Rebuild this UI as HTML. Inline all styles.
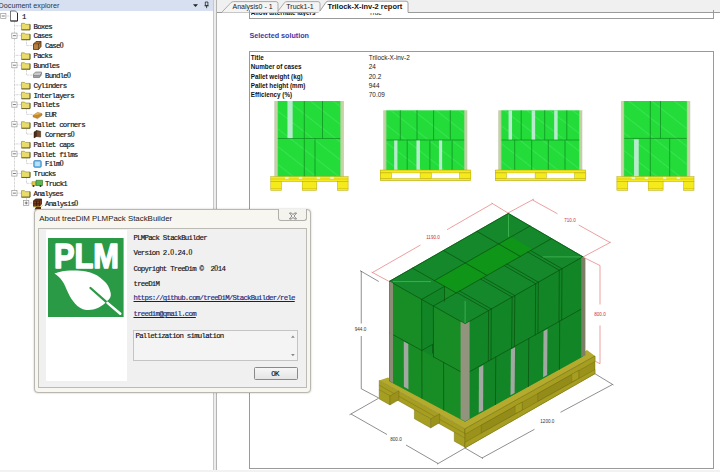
<!DOCTYPE html><html><head><meta charset="utf-8"><title>StackBuilder</title><style>
html,body{margin:0;padding:0;}
body{width:720px;height:472px;overflow:hidden;background:#fff;position:relative;font-family:"Liberation Sans",sans-serif;}
.abs{position:absolute;}
.tt{position:absolute;font-family:"Liberation Mono",monospace;font-size:7.4px;letter-spacing:-0.77px;line-height:10px;height:10px;color:#0c0c0c;white-space:pre;-webkit-text-stroke:0.18px #222;}
.dt{position:absolute;font-family:"Liberation Mono",monospace;font-size:7.4px;letter-spacing:-0.77px;line-height:10px;height:10px;color:#0c0c0c;white-space:pre;-webkit-text-stroke:0.15px #222;}
.z{font-family:"Liberation Serif",serif;letter-spacing:0;display:inline-block;width:3.67px;text-align:center;font-size:7.6px}
.lb{position:absolute;font-weight:bold;font-size:6.3px;line-height:8px;color:#111;white-space:pre;}
.vl{position:absolute;font-size:6.4px;line-height:8px;color:#222;white-space:pre;}
.dim{position:absolute;font-size:4.6px;line-height:6px;white-space:pre;transform:translate(-50%,-50%);}
</style></head><body>
<div class="abs" style="left:0;top:0;width:212.5px;height:10.6px;background:#d6e0f0;"></div>
<div class="abs" style="left:-1.4px;top:0.5px;font-size:7.2px;line-height:9px;color:#2a3446;white-space:pre">Document explorer</div>
<svg class="abs" style="left:190px;top:0" width="22" height="11" viewBox="0 0 22 11"><path d="M3,4.2 h5 l-2.5,2.8z" fill="#222"/><path d="M15.3,2 h2.6 v3.6 h-2.6z M14.5,5.8 h4.2 M16.6,5.8 v2.4" fill="none" stroke="#222" stroke-width="0.8"/></svg>
<div class="abs" style="left:212.5px;top:0;width:4.2px;height:472px;background:#ececec;border-left:0.6px solid #c8c8c8;border-right:0.7px solid #b4b4b4;box-sizing:border-box"></div>
<svg class="abs" style="left:0;top:0" width="213" height="236" viewBox="0 0 213 236"><path d="M14.5,21.0 V193.156" stroke="#a8a8a8" stroke-width="0.7" stroke-dasharray="0.7,0.7" fill="none"/><path d="M5.5,16.0 H10" stroke="#a8a8a8" stroke-width="0.7" stroke-dasharray="0.7,0.7" fill="none"/><path d="M14.5,25.842 H21" stroke="#a8a8a8" stroke-width="0.7" stroke-dasharray="0.7,0.7" fill="none"/><path d="M14.5,35.684 H21" stroke="#a8a8a8" stroke-width="0.7" stroke-dasharray="0.7,0.7" fill="none"/><path d="M26.5,40.526 V45.526 H33" stroke="#a8a8a8" stroke-width="0.7" stroke-dasharray="0.7,0.7" fill="none"/><path d="M14.5,55.368 H21" stroke="#a8a8a8" stroke-width="0.7" stroke-dasharray="0.7,0.7" fill="none"/><path d="M14.5,65.21000000000001 H21" stroke="#a8a8a8" stroke-width="0.7" stroke-dasharray="0.7,0.7" fill="none"/><path d="M26.5,70.052 V75.052 H33" stroke="#a8a8a8" stroke-width="0.7" stroke-dasharray="0.7,0.7" fill="none"/><path d="M14.5,84.894 H21" stroke="#a8a8a8" stroke-width="0.7" stroke-dasharray="0.7,0.7" fill="none"/><path d="M14.5,94.736 H21" stroke="#a8a8a8" stroke-width="0.7" stroke-dasharray="0.7,0.7" fill="none"/><path d="M14.5,104.578 H21" stroke="#a8a8a8" stroke-width="0.7" stroke-dasharray="0.7,0.7" fill="none"/><path d="M26.5,109.42 V114.42 H33" stroke="#a8a8a8" stroke-width="0.7" stroke-dasharray="0.7,0.7" fill="none"/><path d="M14.5,124.262 H21" stroke="#a8a8a8" stroke-width="0.7" stroke-dasharray="0.7,0.7" fill="none"/><path d="M26.5,129.104 V134.104 H33" stroke="#a8a8a8" stroke-width="0.7" stroke-dasharray="0.7,0.7" fill="none"/><path d="M14.5,143.94600000000003 H21" stroke="#a8a8a8" stroke-width="0.7" stroke-dasharray="0.7,0.7" fill="none"/><path d="M14.5,153.788 H21" stroke="#a8a8a8" stroke-width="0.7" stroke-dasharray="0.7,0.7" fill="none"/><path d="M26.5,158.63 V163.63 H33" stroke="#a8a8a8" stroke-width="0.7" stroke-dasharray="0.7,0.7" fill="none"/><path d="M14.5,173.472 H21" stroke="#a8a8a8" stroke-width="0.7" stroke-dasharray="0.7,0.7" fill="none"/><path d="M26.5,178.31400000000002 V183.31400000000002 H33" stroke="#a8a8a8" stroke-width="0.7" stroke-dasharray="0.7,0.7" fill="none"/><path d="M14.5,193.156 H21" stroke="#a8a8a8" stroke-width="0.7" stroke-dasharray="0.7,0.7" fill="none"/><path d="M26.5,197.99800000000002 V202.99800000000002 H33" stroke="#a8a8a8" stroke-width="0.7" stroke-dasharray="0.7,0.7" fill="none"/><rect x="0.6999999999999997" y="13.4" width="5.2" height="5.2" fill="#fff" stroke="#9a9a9a" stroke-width="0.7"/><path d="M1.7999999999999998,16.0 h3" stroke="#444" stroke-width="0.7"/><path d="M10.5,11.0 h5 l2,2 v8 h-7 z" fill="#fff" stroke="#555" stroke-width="0.8"/><path d="M10.5,21.0 h7 v-8" fill="none" stroke="#222" stroke-width="0.9"/><path d="M21.5,23.342 h3 l1,1 h4.5 v5.5 h-8.5 z" fill="#e9dc6c" stroke="#9a8f3a" stroke-width="0.7"/><path d="M21.5,29.842 h8.5 v-5.5" fill="none" stroke="#55502a" stroke-width="0.8"/><rect x="11.8" y="33.083999999999996" width="5.2" height="5.2" fill="#fff" stroke="#9a9a9a" stroke-width="0.7"/><path d="M12.9,35.684 h3" stroke="#444" stroke-width="0.7"/><path d="M21.5,33.184 h3 l1,1 h4.5 v5.5 h-8.5 z" fill="#e9dc6c" stroke="#9a8f3a" stroke-width="0.7"/><path d="M21.5,39.684 h8.5 v-5.5" fill="none" stroke="#55502a" stroke-width="0.8"/><path d="M33.5,44.026 l2.5,-2.5 h5 v5 l-2.5,3 h-5 z" fill="#a8743a" stroke="#4a2c10" stroke-width="0.8"/><path d="M33.5,44.026 h5 l2.5,-2.5 M38.5,44.026 v5.5" fill="none" stroke="#4a2c10" stroke-width="0.7"/><path d="M34,44.326 h4.2 v4.8 h-4.2z" fill="#b8803f"/><path d="M21.5,52.868 h3 l1,1 h4.5 v5.5 h-8.5 z" fill="#e9dc6c" stroke="#9a8f3a" stroke-width="0.7"/><path d="M21.5,59.368 h8.5 v-5.5" fill="none" stroke="#55502a" stroke-width="0.8"/><rect x="11.8" y="62.61000000000001" width="5.2" height="5.2" fill="#fff" stroke="#9a9a9a" stroke-width="0.7"/><path d="M12.9,65.21000000000001 h3" stroke="#444" stroke-width="0.7"/><path d="M21.5,62.71000000000001 h3 l1,1 h4.5 v5.5 h-8.5 z" fill="#e9dc6c" stroke="#9a8f3a" stroke-width="0.7"/><path d="M21.5,69.21000000000001 h8.5 v-5.5" fill="none" stroke="#55502a" stroke-width="0.8"/><path d="M33.5,74.052 l2,-2 h6 v2 l-2,3.5 h-6 z" fill="#c9c9c9" stroke="#777" stroke-width="0.7"/><path d="M33.5,75.552 h6 l2,-2 M33.5,76.852 h6 l2,-2" fill="none" stroke="#666" stroke-width="0.6"/><path d="M21.5,82.394 h3 l1,1 h4.5 v5.5 h-8.5 z" fill="#e9dc6c" stroke="#9a8f3a" stroke-width="0.7"/><path d="M21.5,88.894 h8.5 v-5.5" fill="none" stroke="#55502a" stroke-width="0.8"/><path d="M21.5,92.236 h3 l1,1 h4.5 v5.5 h-8.5 z" fill="#e9dc6c" stroke="#9a8f3a" stroke-width="0.7"/><path d="M21.5,98.736 h8.5 v-5.5" fill="none" stroke="#55502a" stroke-width="0.8"/><rect x="11.8" y="101.97800000000001" width="5.2" height="5.2" fill="#fff" stroke="#9a9a9a" stroke-width="0.7"/><path d="M12.9,104.578 h3" stroke="#444" stroke-width="0.7"/><path d="M21.5,102.078 h3 l1,1 h4.5 v5.5 h-8.5 z" fill="#e9dc6c" stroke="#9a8f3a" stroke-width="0.7"/><path d="M21.5,108.578 h8.5 v-5.5" fill="none" stroke="#55502a" stroke-width="0.8"/><path d="M33,115.42 l4.5,-3 l4.5,1.2 l-4.5,3.4 z" fill="#e8b64c" stroke="#b07820" stroke-width="0.6"/><path d="M33,115.42 v1.4 l4.5,1.8 l4.5,-3.4 v-1.4" fill="#c8862a" stroke="#a06818" stroke-width="0.5"/><rect x="11.8" y="121.662" width="5.2" height="5.2" fill="#fff" stroke="#9a9a9a" stroke-width="0.7"/><path d="M12.9,124.262 h3" stroke="#444" stroke-width="0.7"/><path d="M21.5,121.762 h3 l1,1 h4.5 v5.5 h-8.5 z" fill="#e9dc6c" stroke="#9a8f3a" stroke-width="0.7"/><path d="M21.5,128.262 h8.5 v-5.5" fill="none" stroke="#55502a" stroke-width="0.8"/><path d="M34,132.104 l2.6,-1.6 v6 l-2.6,1.4 z" fill="#4a2a14" stroke="#2a1808" stroke-width="0.5"/><path d="M36.6,130.50400000000002 l4,0.8 v5.8 l-4,-0.6 z" fill="#7a4a26" stroke="#2a1808" stroke-width="0.5"/><path d="M21.5,141.44600000000003 h3 l1,1 h4.5 v5.5 h-8.5 z" fill="#e9dc6c" stroke="#9a8f3a" stroke-width="0.7"/><path d="M21.5,147.94600000000003 h8.5 v-5.5" fill="none" stroke="#55502a" stroke-width="0.8"/><rect x="11.8" y="151.18800000000002" width="5.2" height="5.2" fill="#fff" stroke="#9a9a9a" stroke-width="0.7"/><path d="M12.9,153.788 h3" stroke="#444" stroke-width="0.7"/><path d="M21.5,151.288 h3 l1,1 h4.5 v5.5 h-8.5 z" fill="#e9dc6c" stroke="#9a8f3a" stroke-width="0.7"/><path d="M21.5,157.788 h8.5 v-5.5" fill="none" stroke="#55502a" stroke-width="0.8"/><rect x="33.8" y="160.63" width="7.4" height="6.6" rx="1" fill="#7cc4ee" stroke="#2878b8" stroke-width="0.8"/><rect x="35.2" y="161.82999999999998" width="4.6" height="4.2" fill="#b8e2fa"/><rect x="11.8" y="170.872" width="5.2" height="5.2" fill="#fff" stroke="#9a9a9a" stroke-width="0.7"/><path d="M12.9,173.472 h3" stroke="#444" stroke-width="0.7"/><path d="M21.5,170.972 h3 l1,1 h4.5 v5.5 h-8.5 z" fill="#e9dc6c" stroke="#9a8f3a" stroke-width="0.7"/><path d="M21.5,177.472 h8.5 v-5.5" fill="none" stroke="#55502a" stroke-width="0.8"/><rect x="32" y="181.81400000000002" width="4" height="3.6" fill="#e0c84a" stroke="#8a7a20" stroke-width="0.5"/><path d="M36,180.31400000000002 h6.5 v5.2 h-6.5 z" fill="#58b848" stroke="#2a6a22" stroke-width="0.6"/><circle cx="33.5" cy="185.91400000000002" r="1" fill="#333"/><circle cx="40.5" cy="185.91400000000002" r="1" fill="#333"/><rect x="11.8" y="190.556" width="5.2" height="5.2" fill="#fff" stroke="#9a9a9a" stroke-width="0.7"/><path d="M12.9,193.156 h3" stroke="#444" stroke-width="0.7"/><path d="M21.5,190.656 h3 l1,1 h4.5 v5.5 h-8.5 z" fill="#e9dc6c" stroke="#9a8f3a" stroke-width="0.7"/><path d="M21.5,197.156 h8.5 v-5.5" fill="none" stroke="#55502a" stroke-width="0.8"/><rect x="23.599999999999998" y="200.39800000000002" width="5.2" height="5.2" fill="#fff" stroke="#9a9a9a" stroke-width="0.7"/><path d="M24.7,202.99800000000002 h3" stroke="#444" stroke-width="0.7"/><path d="M26.2,201.49800000000002 v3" stroke="#444" stroke-width="0.7"/><path d="M33.5,200.99800000000002 l2,-2 h6 v5 l-2,2.5 h-6 z" fill="#7a3a1c" stroke="#2a1206" stroke-width="0.7"/><path d="M33.5,200.99800000000002 h6 l2,-2 M39.5,200.99800000000002 v5.5 M36.5,200.99800000000002 v5.5 M33.5,203.79800000000003 h6" fill="none" stroke="#2a1206" stroke-width="0.6"/><path d="M33,206.79800000000003 h8 l1.5,-1.5" fill="none" stroke="#c8a838" stroke-width="0.9"/><path d="M34.5,209.5 l1.5,-2.5 h5 v2.5 z" fill="#5a2e18"/></svg><div class="tt" style="left:22px;top:11.80px">1</div><div class="tt" style="left:33.5px;top:21.64px">Boxes</div><div class="tt" style="left:33.5px;top:31.48px">Cases</div><div class="tt" style="left:45px;top:41.33px">Case<span class="z">0</span></div><div class="tt" style="left:33.5px;top:51.17px">Packs</div><div class="tt" style="left:33.5px;top:61.01px">Bundles</div><div class="tt" style="left:45px;top:70.85px">Bundle<span class="z">0</span></div><div class="tt" style="left:33.5px;top:80.69px">Cylinders</div><div class="tt" style="left:33.5px;top:90.54px">Interlayers</div><div class="tt" style="left:33.5px;top:100.38px">Pallets</div><div class="tt" style="left:45px;top:110.22px">EUR</div><div class="tt" style="left:33.5px;top:120.06px">Pallet corners</div><div class="tt" style="left:45px;top:129.90px">Corners<span class="z">0</span></div><div class="tt" style="left:33.5px;top:139.75px">Pallet caps</div><div class="tt" style="left:33.5px;top:149.59px">Pallet films</div><div class="tt" style="left:45px;top:159.43px">Film<span class="z">0</span></div><div class="tt" style="left:33.5px;top:169.27px">Trucks</div><div class="tt" style="left:45px;top:179.11px">Truck1</div><div class="tt" style="left:33.5px;top:188.96px">Analyses</div><div class="tt" style="left:45px;top:198.80px">Analysis<span class="z">0</span></div>
<div class="abs" style="left:216.7px;top:0;width:504px;height:12.6px;background:#f0f0f0;border-bottom:0.7px solid #9a9a9a;box-sizing:border-box"></div>
<svg class="abs" style="left:216px;top:0" width="200" height="14" viewBox="216 0 200 14"><path d="M221.5,12.6 L231,2.6 Q232,1.6 233.5,1.6 H276 Q278,1.6 278,3.6 V12.6" fill="#f4f4f4" stroke="#8c8c8c" stroke-width="0.7"/><path d="M278,11 L284.5,2.6 Q285.5,1.6 287,1.6 H318 Q320,1.6 320,3.6 V12.6" fill="#f4f4f4" stroke="#8c8c8c" stroke-width="0.7"/><path d="M320,11 L326,2.2 Q327,1.2 328.5,1.2 H406 Q408,1.2 408,3.2 V13.2 H318" fill="#fff" stroke="none"/><path d="M320,11 L326,2.2 Q327,1.2 328.5,1.2 H406 Q408,1.2 408,3.2 V12.3" fill="none" stroke="#7a7a7a" stroke-width="0.7"/></svg>
<div class="abs" style="left:232.5px;top:2.2px;font-size:7px;line-height:9px;color:#222;white-space:pre">Analysis0 - 1</div>
<div class="abs" style="left:286.3px;top:2.2px;font-size:7px;line-height:9px;color:#222;white-space:pre">Truck1-1</div>
<div class="abs" style="left:327.5px;top:2px;font-size:7.45px;font-weight:bold;line-height:9px;color:#111;white-space:pre">Trilock-X-inv-2 report</div>
<div class="abs" style="left:248.6px;top:10px;width:465px;height:8.9px;border:0.7px solid #9a9a9a;border-top:none;box-sizing:border-box"></div>
<div class="abs" style="left:250.8px;top:12.6px;height:3.6px;overflow:hidden"><div class="lb" style="position:relative;top:-3.6px">Allow alternate layers</div></div>
<div class="abs" style="left:369px;top:12.6px;height:3.6px;overflow:hidden"><div class="vl" style="position:relative;top:-3.6px">True</div></div>
<div class="abs" style="left:249.5px;top:30.5px;font-size:7.2px;font-weight:bold;line-height:9px;color:#3a38a8;white-space:pre">Selected solution</div>
<div class="abs" style="left:248.6px;top:51.2px;width:465px;height:418px;border:0.7px solid #9a9a9a;box-sizing:border-box"></div>
<div class="abs" style="left:0;top:469.6px;width:720px;height:3px;background:#f2f2f2"></div>
<div class="lb" style="left:250.8px;top:53.90px">Title</div><div class="vl" style="left:368.8px;top:53.90px">Trilock-X-inv-2</div>
<div class="lb" style="left:250.8px;top:63.20px">Number of cases</div><div class="vl" style="left:368.8px;top:63.20px">24</div>
<div class="lb" style="left:250.8px;top:72.50px">Pallet weight (kg)</div><div class="vl" style="left:368.8px;top:72.50px">20.2</div>
<div class="lb" style="left:250.8px;top:81.80px">Pallet height (mm)</div><div class="vl" style="left:368.8px;top:81.80px">944</div>
<div class="lb" style="left:250.8px;top:91.10px">Efficiency (%)</div><div class="vl" style="left:368.8px;top:91.10px">70.09</div>
<svg class="abs" style="left:0;top:0" width="720" height="200" viewBox="0 0 720 200"><defs><pattern id="dg" width="14" height="14" patternUnits="userSpaceOnUse" patternTransform="rotate(38)"><path d="M0,0.5 H14" stroke="#6cf284" stroke-width="0.6" opacity="0.5"/></pattern></defs><rect x="277.5" y="101" width="63.19999999999999" height="75.69999999999999" fill="#23dc3a"/><rect x="277.5" y="101" width="63.19999999999999" height="75.69999999999999" fill="url(#dg)"/><rect x="287.45" y="101" width="5.199999999999989" height="37.5" fill="#b6eccc"/><path d="M277.5,138.5 H340.7" stroke="#0d8a1e" stroke-width="0.7"/><path d="M304.3,101 V138.5" stroke="#0d8a1e" stroke-width="0.7"/><path d="M322.5,101 V138.5" stroke="#0d8a1e" stroke-width="0.7"/><path d="M304.3,138.5 V176.7" stroke="#0d8a1e" stroke-width="0.7"/><path d="M315,138.5 V176.7" stroke="#0d8a1e" stroke-width="0.7"/><rect x="274.7" y="101" width="2.8000000000000114" height="75.69999999999999" fill="#c6d4a6"/><rect x="340.7" y="101" width="2.8000000000000114" height="75.69999999999999" fill="#c6d4a6"/><path d="M277.5,101 V176.7 M340.7,101 V176.7" stroke="#8cc878" stroke-width="0.5"/><path d="M274.7,101 V176.7 M343.5,101 V176.7" stroke="#b4bca4" stroke-width="0.5"/><rect x="270.8" y="176.7" width="77.30000000000001" height="4.800000000000011" fill="#f4ea1c" stroke="#b8a800" stroke-width="0.5"/><path d="M270.8,179.0 H348.1" stroke="#b8a800" stroke-width="0.4"/><rect x="285.1" y="176.89999999999998" width="3.5" height="2" fill="#e8f4d8"/><rect x="298.8" y="176.89999999999998" width="3.3999999999999773" height="2" fill="#e8f4d8"/><rect x="316.7" y="176.89999999999998" width="3.400000000000034" height="2" fill="#e8f4d8"/><rect x="330.3" y="176.89999999999998" width="3.5" height="2" fill="#e8f4d8"/><rect x="270.8" y="181.5" width="10.599999999999966" height="8.800000000000011" fill="#f4ea1c" stroke="#b8a800" stroke-width="0.5"/><path d="M270.8,188.5 H281.4" stroke="#b8a800" stroke-width="0.4"/><rect x="302.2" y="181.5" width="14.5" height="8.800000000000011" fill="#f4ea1c" stroke="#b8a800" stroke-width="0.5"/><path d="M302.2,188.5 H316.7" stroke="#b8a800" stroke-width="0.4"/><rect x="337.5" y="181.5" width="10.600000000000023" height="8.800000000000011" fill="#f4ea1c" stroke="#b8a800" stroke-width="0.5"/><path d="M337.5,188.5 H348.1" stroke="#b8a800" stroke-width="0.4"/><rect x="386.1" y="110.3" width="78.5" height="59.8" fill="#23dc3a"/><rect x="386.1" y="110.3" width="78.5" height="59.8" fill="url(#dg)"/><rect x="394.15" y="140" width="3.3000000000000114" height="30.099999999999994" fill="#b6eccc"/><rect x="416.45" y="140" width="3.5" height="30.099999999999994" fill="#b6eccc"/><rect x="438.95" y="140" width="3.1999999999999886" height="30.099999999999994" fill="#b6eccc"/><path d="M386.1,140 H464.6" stroke="#0d8a1e" stroke-width="0.7"/><path d="M400.3,110.3 V140" stroke="#0d8a1e" stroke-width="0.7"/><path d="M417,110.3 V140" stroke="#0d8a1e" stroke-width="0.7"/><path d="M433.6,110.3 V140" stroke="#0d8a1e" stroke-width="0.7"/><path d="M450.3,110.3 V140" stroke="#0d8a1e" stroke-width="0.7"/><path d="M407.2,140 V170.1" stroke="#0d8a1e" stroke-width="0.7"/><path d="M429.9,140 V170.1" stroke="#0d8a1e" stroke-width="0.7"/><path d="M452.1,140 V170.1" stroke="#0d8a1e" stroke-width="0.7"/><rect x="383.6" y="110.3" width="2.5" height="59.8" fill="#c6d4a6"/><rect x="464.6" y="110.3" width="2.3999999999999773" height="59.8" fill="#c6d4a6"/><path d="M386.1,110.3 V170.1 M464.6,110.3 V170.1" stroke="#8cc878" stroke-width="0.5"/><path d="M383.6,110.3 V170.1 M467,110.3 V170.1" stroke="#b4bca4" stroke-width="0.5"/><rect x="380.3" y="170.1" width="90.5" height="10.200000000000017" fill="#fff" stroke="#b8a800" stroke-width="0.5"/><rect x="380.3" y="170.1" width="90.5" height="2.8000000000000114" fill="#f4ea1c" stroke="#b8a800" stroke-width="0.4"/><rect x="380.3" y="178.5" width="90.5" height="1.8000000000000114" fill="#f4ea1c" stroke="#b8a800" stroke-width="0.4"/><rect x="380.3" y="172.9" width="11.099999999999966" height="5.599999999999994" fill="#f4ea1c" stroke="#b8a800" stroke-width="0.5"/><rect x="420.1" y="172.9" width="11.199999999999989" height="5.599999999999994" fill="#f4ea1c" stroke="#b8a800" stroke-width="0.5"/><rect x="459.7" y="172.9" width="11.100000000000023" height="5.599999999999994" fill="#f4ea1c" stroke="#b8a800" stroke-width="0.5"/><rect x="501.1" y="110.3" width="78.5" height="59.8" fill="#23dc3a"/><rect x="501.1" y="110.3" width="78.5" height="59.8" fill="url(#dg)"/><rect x="508.55" y="110.3" width="3.5" height="29.700000000000003" fill="#b6eccc"/><rect x="531.65" y="110.3" width="3.5" height="29.700000000000003" fill="#b6eccc"/><rect x="554.15" y="110.3" width="3.5" height="29.700000000000003" fill="#b6eccc"/><path d="M501.1,140 H579.6" stroke="#0d8a1e" stroke-width="0.7"/><path d="M521.2,110.3 V140" stroke="#0d8a1e" stroke-width="0.7"/><path d="M544.7,110.3 V140" stroke="#0d8a1e" stroke-width="0.7"/><path d="M566.8,110.3 V140" stroke="#0d8a1e" stroke-width="0.7"/><path d="M514.7,140 V170.1" stroke="#0d8a1e" stroke-width="0.7"/><path d="M531.7,140 V170.1" stroke="#0d8a1e" stroke-width="0.7"/><path d="M548.3,140 V170.1" stroke="#0d8a1e" stroke-width="0.7"/><path d="M565,140 V170.1" stroke="#0d8a1e" stroke-width="0.7"/><rect x="498.6" y="110.3" width="2.5" height="59.8" fill="#c6d4a6"/><rect x="579.6" y="110.3" width="2.3999999999999773" height="59.8" fill="#c6d4a6"/><path d="M501.1,110.3 V170.1 M579.6,110.3 V170.1" stroke="#8cc878" stroke-width="0.5"/><path d="M498.6,110.3 V170.1 M582,110.3 V170.1" stroke="#b4bca4" stroke-width="0.5"/><rect x="495.3" y="170.1" width="90.49999999999994" height="10.200000000000017" fill="#fff" stroke="#b8a800" stroke-width="0.5"/><rect x="495.3" y="170.1" width="90.49999999999994" height="2.8000000000000114" fill="#f4ea1c" stroke="#b8a800" stroke-width="0.4"/><rect x="495.3" y="178.5" width="90.49999999999994" height="1.8000000000000114" fill="#f4ea1c" stroke="#b8a800" stroke-width="0.4"/><rect x="495.3" y="172.9" width="11.099999999999966" height="5.599999999999994" fill="#f4ea1c" stroke="#b8a800" stroke-width="0.5"/><rect x="535.1" y="172.9" width="11.199999999999932" height="5.599999999999994" fill="#f4ea1c" stroke="#b8a800" stroke-width="0.5"/><rect x="574.7" y="172.9" width="11.099999999999909" height="5.599999999999994" fill="#f4ea1c" stroke="#b8a800" stroke-width="0.5"/><rect x="623.9" y="101" width="63.200000000000045" height="75.69999999999999" fill="#23dc3a"/><rect x="623.9" y="101" width="63.200000000000045" height="75.69999999999999" fill="url(#dg)"/><rect x="634.05" y="139.3" width="4.7000000000000455" height="37.39999999999998" fill="#b6eccc"/><path d="M623.9,138.4 H687.1" stroke="#0d8a1e" stroke-width="0.7"/><path d="M650.3,101 V138.4" stroke="#0d8a1e" stroke-width="0.7"/><path d="M660.5,101 V138.4" stroke="#0d8a1e" stroke-width="0.7"/><path d="M650.3,138.4 V176.7" stroke="#0d8a1e" stroke-width="0.7"/><path d="M669.7,138.4 V176.7" stroke="#0d8a1e" stroke-width="0.7"/><rect x="621.4" y="101" width="2.5" height="75.69999999999999" fill="#c6d4a6"/><rect x="687.1" y="101" width="2.7999999999999545" height="75.69999999999999" fill="#c6d4a6"/><path d="M623.9,101 V176.7 M687.1,101 V176.7" stroke="#8cc878" stroke-width="0.5"/><path d="M621.4,101 V176.7 M689.9,101 V176.7" stroke="#b4bca4" stroke-width="0.5"/><rect x="616.9" y="176.7" width="77.10000000000002" height="4.800000000000011" fill="#f4ea1c" stroke="#b8a800" stroke-width="0.5"/><path d="M616.9,179.0 H694" stroke="#b8a800" stroke-width="0.4"/><rect x="631.5" y="176.89999999999998" width="3.5" height="2" fill="#e8f4d8"/><rect x="644.7" y="176.89999999999998" width="3.5" height="2" fill="#e8f4d8"/><rect x="663.1" y="176.89999999999998" width="3.199999999999932" height="2" fill="#e8f4d8"/><rect x="676.7" y="176.89999999999998" width="3.3999999999999773" height="2" fill="#e8f4d8"/><rect x="616.9" y="181.5" width="10.899999999999977" height="8.800000000000011" fill="#f4ea1c" stroke="#b8a800" stroke-width="0.5"/><path d="M616.9,188.5 H627.8" stroke="#b8a800" stroke-width="0.4"/><rect x="648.2" y="181.5" width="14.899999999999977" height="8.800000000000011" fill="#f4ea1c" stroke="#b8a800" stroke-width="0.5"/><path d="M648.2,188.5 H663.1" stroke="#b8a800" stroke-width="0.4"/><rect x="683.6" y="181.5" width="10.399999999999977" height="8.800000000000011" fill="#f4ea1c" stroke="#b8a800" stroke-width="0.5"/><path d="M683.6,188.5 H694" stroke="#b8a800" stroke-width="0.4"/></svg>
<svg class="abs" style="left:0;top:0" width="720" height="472" viewBox="0 0 720 472"><polygon points="379.20,380.40 465.00,428.75 595.00,356.00 587.00,350.00 465.00,421.00 388.00,377.50" fill="#b4ab2e"/><polygon points="379.20,380.40 465.00,428.75 465.00,438.25 379.20,389.90" fill="#a69e20" stroke="#6e6812" stroke-width="0.4"/><path d="M379.2,385.2 L465,433.55" stroke="#6e6812" stroke-width="0.4"/><polygon points="379.20,389.90 389.93,395.94 389.93,404.94 379.20,398.90" fill="#a69e20" stroke="#6e6812" stroke-width="0.4"/><polygon points="389.93,395.94 398.93,390.74 398.93,399.74 389.93,404.94" fill="#9a921b" stroke="#6e6812" stroke-width="0.4"/><polygon points="414.38,409.72 430.68,418.91 430.68,427.91 414.38,418.72" fill="#a69e20" stroke="#6e6812" stroke-width="0.4"/><polygon points="430.68,418.91 439.68,413.71 439.68,422.71 430.68,427.91" fill="#9a921b" stroke="#6e6812" stroke-width="0.4"/><polygon points="454.27,432.21 465.00,438.25 465.00,447.25 454.27,441.21" fill="#a69e20" stroke="#6e6812" stroke-width="0.4"/><polygon points="465.00,428.75 595.00,356.00 595.00,373.70 465.00,447.95" fill="#9a921b" stroke="#6e6812" stroke-width="0.4"/><polygon points="465.00,428.75 595.00,356.00 595.00,361.50 465.00,434.25" fill="#a69e20" stroke="#6e6812" stroke-width="0.4"/><polygon points="481.25,425.16 522.20,402.24 522.20,410.24 481.25,433.16" fill="#948c19" stroke="#6e6812" stroke-width="0.4"/><polygon points="522.20,402.24 522.20,410.24 515.20,413.74 515.20,405.74" fill="#a69e20" stroke="#6e6812" stroke-width="0.3"/><polygon points="537.80,393.51 578.75,370.59 578.75,378.59 537.80,401.51" fill="#948c19" stroke="#6e6812" stroke-width="0.4"/><polygon points="578.75,370.59 578.75,378.59 571.75,382.09 571.75,374.09" fill="#a69e20" stroke="#6e6812" stroke-width="0.3"/><polygon points="465.00,442.25 595.00,369.50 595.00,373.70 465.00,447.95" fill="#a69e20" stroke="#6e6812" stroke-width="0.4"/><polygon points="389.50,281.30 508.30,213.40 582.90,256.80 582.90,356.30 465.10,421.30 389.50,381.00" fill="#128526" stroke="#128526" stroke-width="0.5"/><polygon points="389.50,281.30 508.30,213.40 582.90,256.80 465.10,323.90" fill="#14882a" stroke="#14882a" stroke-width="0.4"/><polygon points="389.50,281.30 465.10,323.90 465.10,421.30 389.50,381.00" fill="#188d26" stroke="#188d26" stroke-width="0.4"/><polygon points="465.10,323.90 582.90,256.80 582.90,356.30 465.10,421.30" fill="#128526"/><polygon points="434.44,280.58 465.28,262.97 487.01,275.39 456.24,292.94" fill="#0f9518"/><polygon points="465.28,262.97 498.66,243.91 520.31,256.40 487.01,275.39" fill="#0f9518"/><polygon points="498.66,243.91 511.03,236.85 532.65,249.36 520.31,256.40" fill="#0f9518"/><polygon points="421.63,299.41 444.56,286.32 444.53,301.22 433.34,306.01 433.53,356.88 421.81,350.47" fill="#128526"/><polygon points="444.56,286.32 456.24,292.94 444.53,301.22" fill="#188d26"/><path d="M433.34,306.01 L551.56,238.57 M434.44,280.58 L530.00,226.02 M456.94,292.55 L488.61,310.51 M480.56,279.07 L512.14,297.10 M504.20,265.59 L535.70,283.68 M527.87,252.09 L559.29,270.25 M412.51,268.15 L456.24,292.94 M443.43,250.48 L487.01,275.39 M476.89,231.35 L520.31,256.40 M421.63,299.41 L444.56,286.32 M444.56,286.32 L444.53,301.22 M421.63,299.41 L421.81,350.47 M433.34,306.01 L433.53,356.88 M421.81,350.47 L432.57,344.36 M432.57,344.36 L432.58,353.03 M389.50,332.77 L421.81,350.47 M433.53,356.88 L465.10,374.18 M421.81,350.47 L421.99,398.32 M443.58,362.39 L443.72,409.91 M465.10,374.18 L582.90,308.17 M488.61,310.51 L488.32,361.17 M491.28,308.99 L490.96,359.69 M491.28,308.99 L459.61,291.02 M512.14,297.10 L511.70,348.06 M514.82,295.58 L514.37,346.57 M514.82,295.58 L483.24,277.54 M535.70,283.68 L535.26,334.86 M538.38,282.16 L537.94,333.36 M538.38,282.16 L506.88,264.06 M559.29,270.25 L558.99,321.56 M561.97,268.72 L561.69,320.05 M561.97,268.72 L530.56,250.55 M495.77,356.99 L495.43,404.56 M528.81,338.48 L528.38,386.39 M559.69,321.17 L559.42,369.26 M389.50,281.30 L465.10,323.90 M465.10,323.90 L582.90,256.80 M389.50,281.30 L508.30,213.40 M508.30,213.40 L582.90,256.80 " stroke="#08520f" stroke-width="0.7" fill="none" stroke-linecap="round"/><polygon points="403.79,341.59 408.31,344.06 408.44,389.24 403.89,386.81" fill="#a2a8a2"/><polygon points="478.93,367.41 483.32,364.95 483.10,410.39 478.76,412.79" fill="#a2a8a2"/><polygon points="510.90,349.49 515.05,347.17 514.64,392.98 510.51,395.26" fill="#a2a8a2"/><polygon points="543.51,331.23 547.49,328.99 547.14,375.04 543.14,377.25" fill="#a2a8a2"/><path d="M393,281.6 H431 M465.1,323 V301 M508.5,214.5 V236.8 M542.7,256.9 H581" stroke="#5fd070" stroke-width="0.6" fill="none" opacity="0.9"/><polygon points="389.50,281.30 393.00,283.20 393.00,383.00 389.50,381.00" fill="#8a8c74"/><polygon points="460.60,321.60 465.10,323.90 469.60,321.60 469.60,419.00 465.10,421.30 460.60,419.00" fill="#92947e"/><polygon points="581.20,257.80 582.90,256.80 585.40,258.40 585.40,355.40 582.90,356.30 581.20,357.20" fill="#7c7e66"/><path d="M388.75,281.25 L371.5,272 M372.5,272.5 L420.5,245 M447,229.7 L492.5,203.5 M508,213 L491.5,203" stroke="#e06060" stroke-width="0.6" fill="none"/><path d="M508,213 L534,199 M532.5,200 L557.5,213.75 M578.75,225 L610,242.5 M583,257 L611,242" stroke="#e06060" stroke-width="0.6" fill="none"/><path d="M583.75,257.5 L600,265.5 V304.5 M600,325.5 V363.75 L595,361" stroke="#e06060" stroke-width="0.6" fill="none"/><path d="M378.75,281.5 L360,270.6 M361.25,271 V323.5 M361.25,336 V388.75 L378.75,398" stroke="#444" stroke-width="0.6" fill="none"/><path d="M378.5,398.3 L349.5,414.8 M351,414 L387,434.5 M406,445 L438,463.5 M465,448 L437,464.2" stroke="#444" stroke-width="0.6" fill="none"/><path d="M465,448 L483,458.5 M482,458 L534.5,429.3 M560.5,412.3 L612.5,384.5 M595,373.75 L613.5,385" stroke="#444" stroke-width="0.6" fill="none"/></svg>
<div class="dim" style="left:433px;top:238px;color:#d03030">1190.0</div>
<div class="dim" style="left:570px;top:220.5px;color:#d03030">710.0</div>
<div class="dim" style="left:600px;top:314.5px;color:#d03030">800.0</div>
<div class="dim" style="left:360.5px;top:330px;color:#333">944.0</div>
<div class="dim" style="left:396px;top:439.5px;color:#333">800.0</div>
<div class="dim" style="left:547.3px;top:421.6px;color:#333">1200.0</div>
<div class="abs" style="left:33.8px;top:208.9px;width:277.5px;height:184.6px;background:#f7f6f0;border:0.7px solid #b8b8b0;border-radius:4px;box-sizing:border-box;box-shadow:0 0 2px rgba(0,0,0,0.25)"></div>
<div class="abs" style="left:39.3px;top:213.9px;font-size:7.9px;line-height:10px;color:#1a1a1a;white-space:pre">About treeDiM PLMPack StackBuilder</div>
<div class="abs" style="left:278px;top:209.3px;width:29px;height:11.8px;border:0.7px solid #b0b0a8;border-top:none;border-radius:0 0 3px 3px;box-sizing:border-box;background:#f4f3ee"></div>
<svg class="abs" style="left:288px;top:211.5px" width="10" height="8" viewBox="0 0 10 8"><path d="M1.5,1 h2 l1.5,1.7 l1.5,-1.7 h2 l-2.5,3 l2.5,3 h-2 l-1.5,-1.7 l-1.5,1.7 h-2 l2.5,-3z" fill="#fff" stroke="#555" stroke-width="0.7"/></svg>
<div class="abs" style="left:38px;top:227.8px;width:269px;height:160.4px;background:#f0f0f0;border:0.7px solid #bcbcb4;box-sizing:border-box"></div>
<div class="abs" style="left:46.3px;top:229.5px;width:80.5px;height:151.7px;background:#fff"></div>
<svg class="abs" style="left:48px;top:237.6px" width="75.6" height="79.4" viewBox="0 0 75.6 79.4"><rect width="75.6" height="79.4" fill="#2a9a46"/><text x="6" y="30" font-family="Liberation Sans, sans-serif" font-weight="bold" font-size="34.5" fill="#fff" stroke="#fff" stroke-width="1.5" stroke-linejoin="round" textLength="65" lengthAdjust="spacingAndGlyphs">PLM</text><path d="M6.4,35.6 C12,33.5 17,32.8 22.1,32.6 C28,32.4 33,32.6 38.2,33.6 C44,34.8 48.5,36.8 52.3,39.7 C57,43.2 60,46.8 61.4,50.7 C62.6,54 63,56 62.8,57.4 C62.4,60 61.2,61.2 59.4,62.8 C56.5,66 54,68 50.3,69.8 C46,71.8 42,72.3 38.2,71.9 C33.5,71.4 30,69 27.2,65.8 C24,62.2 22,58.8 20.1,54.8 C18,50 16.5,46 14.1,42.7 C12,39.8 9.5,37.6 6.4,35.6 Z" fill="#fff"/><path d="M42.5,50 L60.5,65.8" stroke="#2a9a46" stroke-width="2.3" stroke-linecap="round" fill="none"/><path d="M59.5,64.9 L72.3,75.8" stroke="#fff" stroke-width="2.5" stroke-linecap="round"/></svg>
<div class="dt" style="left:133.5px;top:232.80px;">PLMPack StackBuilder</div>
<div class="dt" style="left:133.5px;top:248.40px;">Version 2.<span class="z">0</span>.24.<span class="z">0</span></div>
<div class="dt" style="left:133.5px;top:263.50px;">Copyright TreeDim ©  2<span class="z">0</span>14</div>
<div class="dt" style="left:133.5px;top:279.10px;">treeDiM</div>
<div class="dt" style="left:133.5px;top:293.30px;color:#1c28a0;text-decoration:underline;">https://github.com/treeDiM/StackBuilder/rele</div>
<div class="dt" style="left:133.5px;top:309.00px;color:#1c28a0;text-decoration:underline;">treedim@gmail.com</div>
<div class="abs" style="left:133px;top:330px;width:165px;height:30.8px;background:#f4f4f4;border:0.7px solid #c4c4c4;box-sizing:border-box"></div>
<div class="dt" style="left:135.5px;top:330.8px">Palletization simulation</div>
<svg class="abs" style="left:289px;top:332px" width="8" height="28" viewBox="0 0 8 28"><path d="M2,5.7 l1.9,-2.2 l1.9,2.2z M2,22 l1.9,2.2 l1.9,-2.2z" fill="#888"/></svg>
<div class="abs" style="left:253.5px;top:367.4px;width:44.5px;height:12.8px;background:linear-gradient(#f6f6f6,#e4e4e4);border:0.7px solid #8a8a8a;border-radius:1.5px;box-sizing:border-box"></div>
<div class="dt" style="left:271.3px;top:369px">OK</div>
</body></html>
